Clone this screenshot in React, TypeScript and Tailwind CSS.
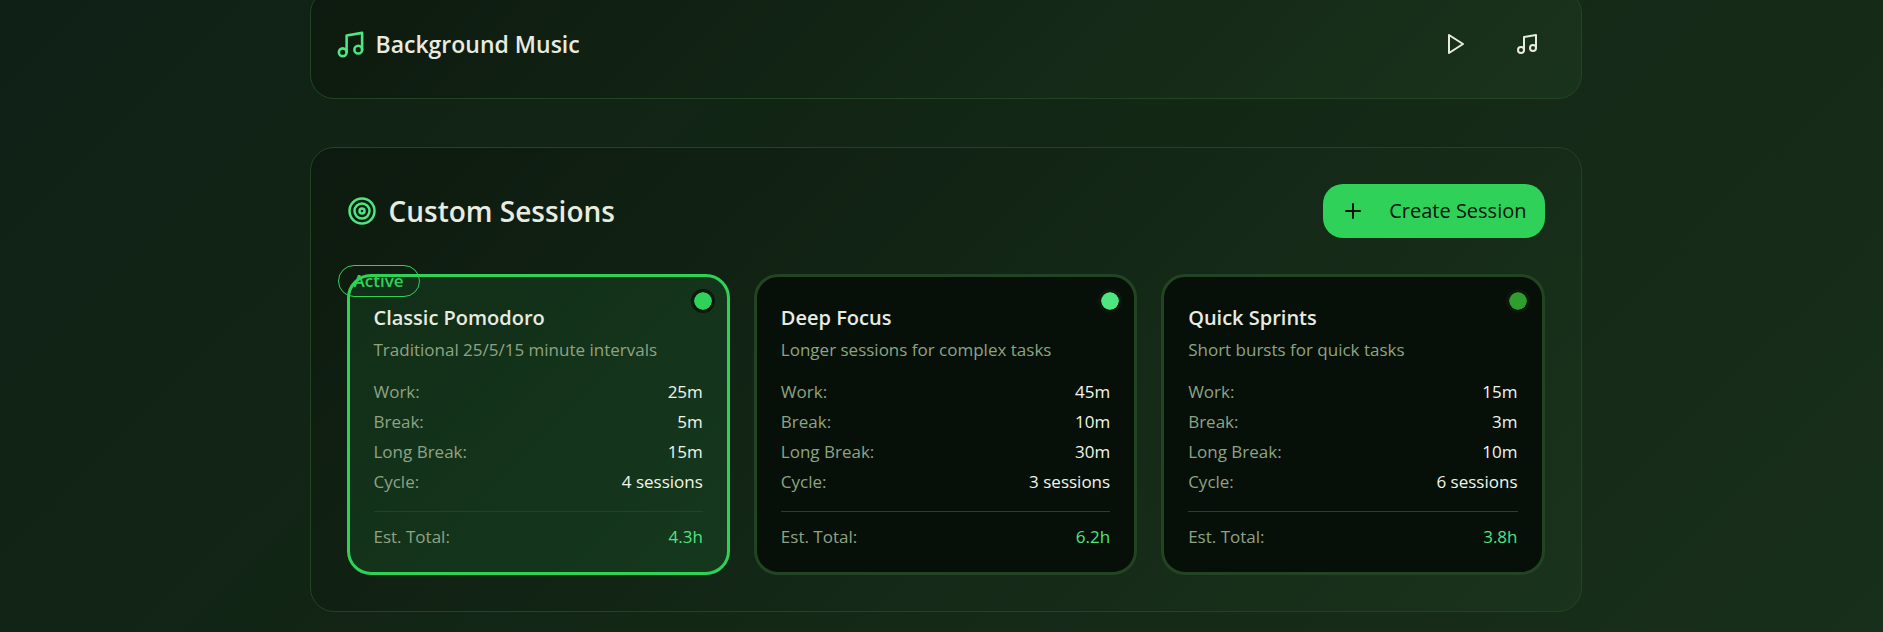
import { useState } from 'react';
import { Music, Plus } from 'lucide-react';
import clsx from 'clsx';

interface Session {
  name: string;
  description: string;
  work: number;
  rest: number;
  longRest: number;
  cycle: number;
  total: string;
  dot: string;
}

const sessions: Session[] = [
  {
    name: 'Classic Pomodoro',
    description: 'Traditional 25/5/15 minute intervals',
    work: 25,
    rest: 5,
    longRest: 15,
    cycle: 4,
    total: '4.3h',
    dot: 'bg-[#30d158]',
  },
  {
    name: 'Deep Focus',
    description: 'Longer sessions for complex tasks',
    work: 45,
    rest: 10,
    longRest: 30,
    cycle: 3,
    total: '6.2h',
    dot: 'bg-[#4de680]',
  },
  {
    name: 'Quick Sprints',
    description: 'Short bursts for quick tasks',
    work: 15,
    rest: 3,
    longRest: 10,
    cycle: 6,
    total: '3.8h',
    dot: 'bg-[#2e9e2e]',
  },
];

const panel =
  'rounded-3xl border border-[#224422] bg-linear-135 from-[#0d1a0f] via-[#132716] to-[#1a331c]';

function PlayIcon() {
  return (
    <svg width="24" height="24" viewBox="0 0 24 24" fill="none" stroke="currentColor" strokeWidth="2" strokeLinecap="round" strokeLinejoin="round">
      <polygon points="6 3 20 12 6 21 6 3" />
    </svg>
  );
}

function TargetIcon() {
  return (
    <svg className="text-[#4de680]" width="30" height="30" viewBox="0 0 24 24" fill="none" stroke="currentColor" strokeWidth="2">
      <circle cx="12" cy="12" r="10" />
      <circle cx="12" cy="12" r="6" />
      <circle cx="12" cy="12" r="2" />
    </svg>
  );
}

function Row({ label, value }: { label: string; value: string }) {
  return (
    <div className="flex justify-between leading-[30px]">
      <dt className="text-[#8fa383]">{label}</dt>
      <dd className="text-[#f1f5e9]">{value}</dd>
    </div>
  );
}

function SessionCard({ session, active }: { session: Session; active: boolean }) {
  return (
    <article
      className={clsx(
        'relative rounded-3xl border-3 p-6 text-[17px]',
        active
          ? 'border-[#30d158] bg-linear-135 from-[#122e18] to-[#15381d]'
          : 'border-[#224422] bg-[#061008]'
      )}
    >
      {active && (
        <span className="absolute -top-3 -left-3 rounded-full border border-[#30d158] px-[15px] leading-[30px] font-semibold text-[#30d158]">
          Active
        </span>
      )}
      <span className={clsx('absolute top-3 right-3 size-6 rounded-full border-3 border-[#0d170d] bg-clip-padding', session.dot)} />

      <h3 className="text-xl leading-[34px] font-semibold text-[#e8ebe0]">{session.name}</h3>
      <p className="leading-[30px] text-[#8fa383]">{session.description}</p>

      <dl className="mt-3">
        <Row label="Work:" value={`${session.work}m`} />
        <Row label="Break:" value={`${session.rest}m`} />
        <Row label="Long Break:" value={`${session.longRest}m`} />
        <Row label="Cycle:" value={`${session.cycle} sessions`} />
      </dl>

      <div className="mt-3.5 flex justify-between border-t border-[#224424] pt-3.5 leading-[22px]">
        <span className="text-[#8fa383]">Est. Total:</span>
        <span className="text-[#4de680]">{session.total}</span>
      </div>
    </article>
  );
}

function App() {
  const [activeSession] = useState('Classic Pomodoro');

  return (
    <div className="min-h-screen overflow-hidden bg-linear-135 from-[#0f2116] via-[#132715] to-[#182f1b] pl-2 font-['Open_Sans','Noto_Sans',sans-serif] text-[#e8ebe0]">
      <main className="mx-auto -mt-[11px] max-w-[1272px] space-y-12 pb-5">
        {/* Background music */}
        <section className={clsx(panel, 'flex items-center justify-between p-6')}>
          <div className="flex items-center gap-2.5">
            <Music size={31} className="text-[#4de680]" />
            <h2 className="text-[23px] leading-9 font-semibold">Background Music</h2>
          </div>
          <div className="flex gap-3">
            <button aria-label="Play" className="flex h-[60px] w-[60px] items-center justify-center">
              <PlayIcon />
            </button>
            <button aria-label="Choose track" className="flex h-[60px] w-[60px] items-center justify-center">
              <Music size={24} />
            </button>
          </div>
        </section>

        {/* Custom sessions */}
        <section className={clsx(panel, 'p-9')}>
          <div className="mb-9 flex items-center justify-between">
            <div className="flex items-center gap-3">
              <TargetIcon />
              <h2 className="text-[28px] leading-9 font-semibold">Custom Sessions</h2>
            </div>
            <button className="flex h-[54px] items-center gap-6 rounded-[20px] bg-[#30d158] px-[18px] text-xl font-medium text-[#0a140b]">
              <Plus size={24} />
              Create Session
            </button>
          </div>

          <div className="grid grid-cols-3 gap-6">
            {sessions.map((session) => (
              <SessionCard key={session.name} session={session} active={session.name === activeSession} />
            ))}
          </div>
        </section>
      </main>
    </div>
  );
}

export default App;
